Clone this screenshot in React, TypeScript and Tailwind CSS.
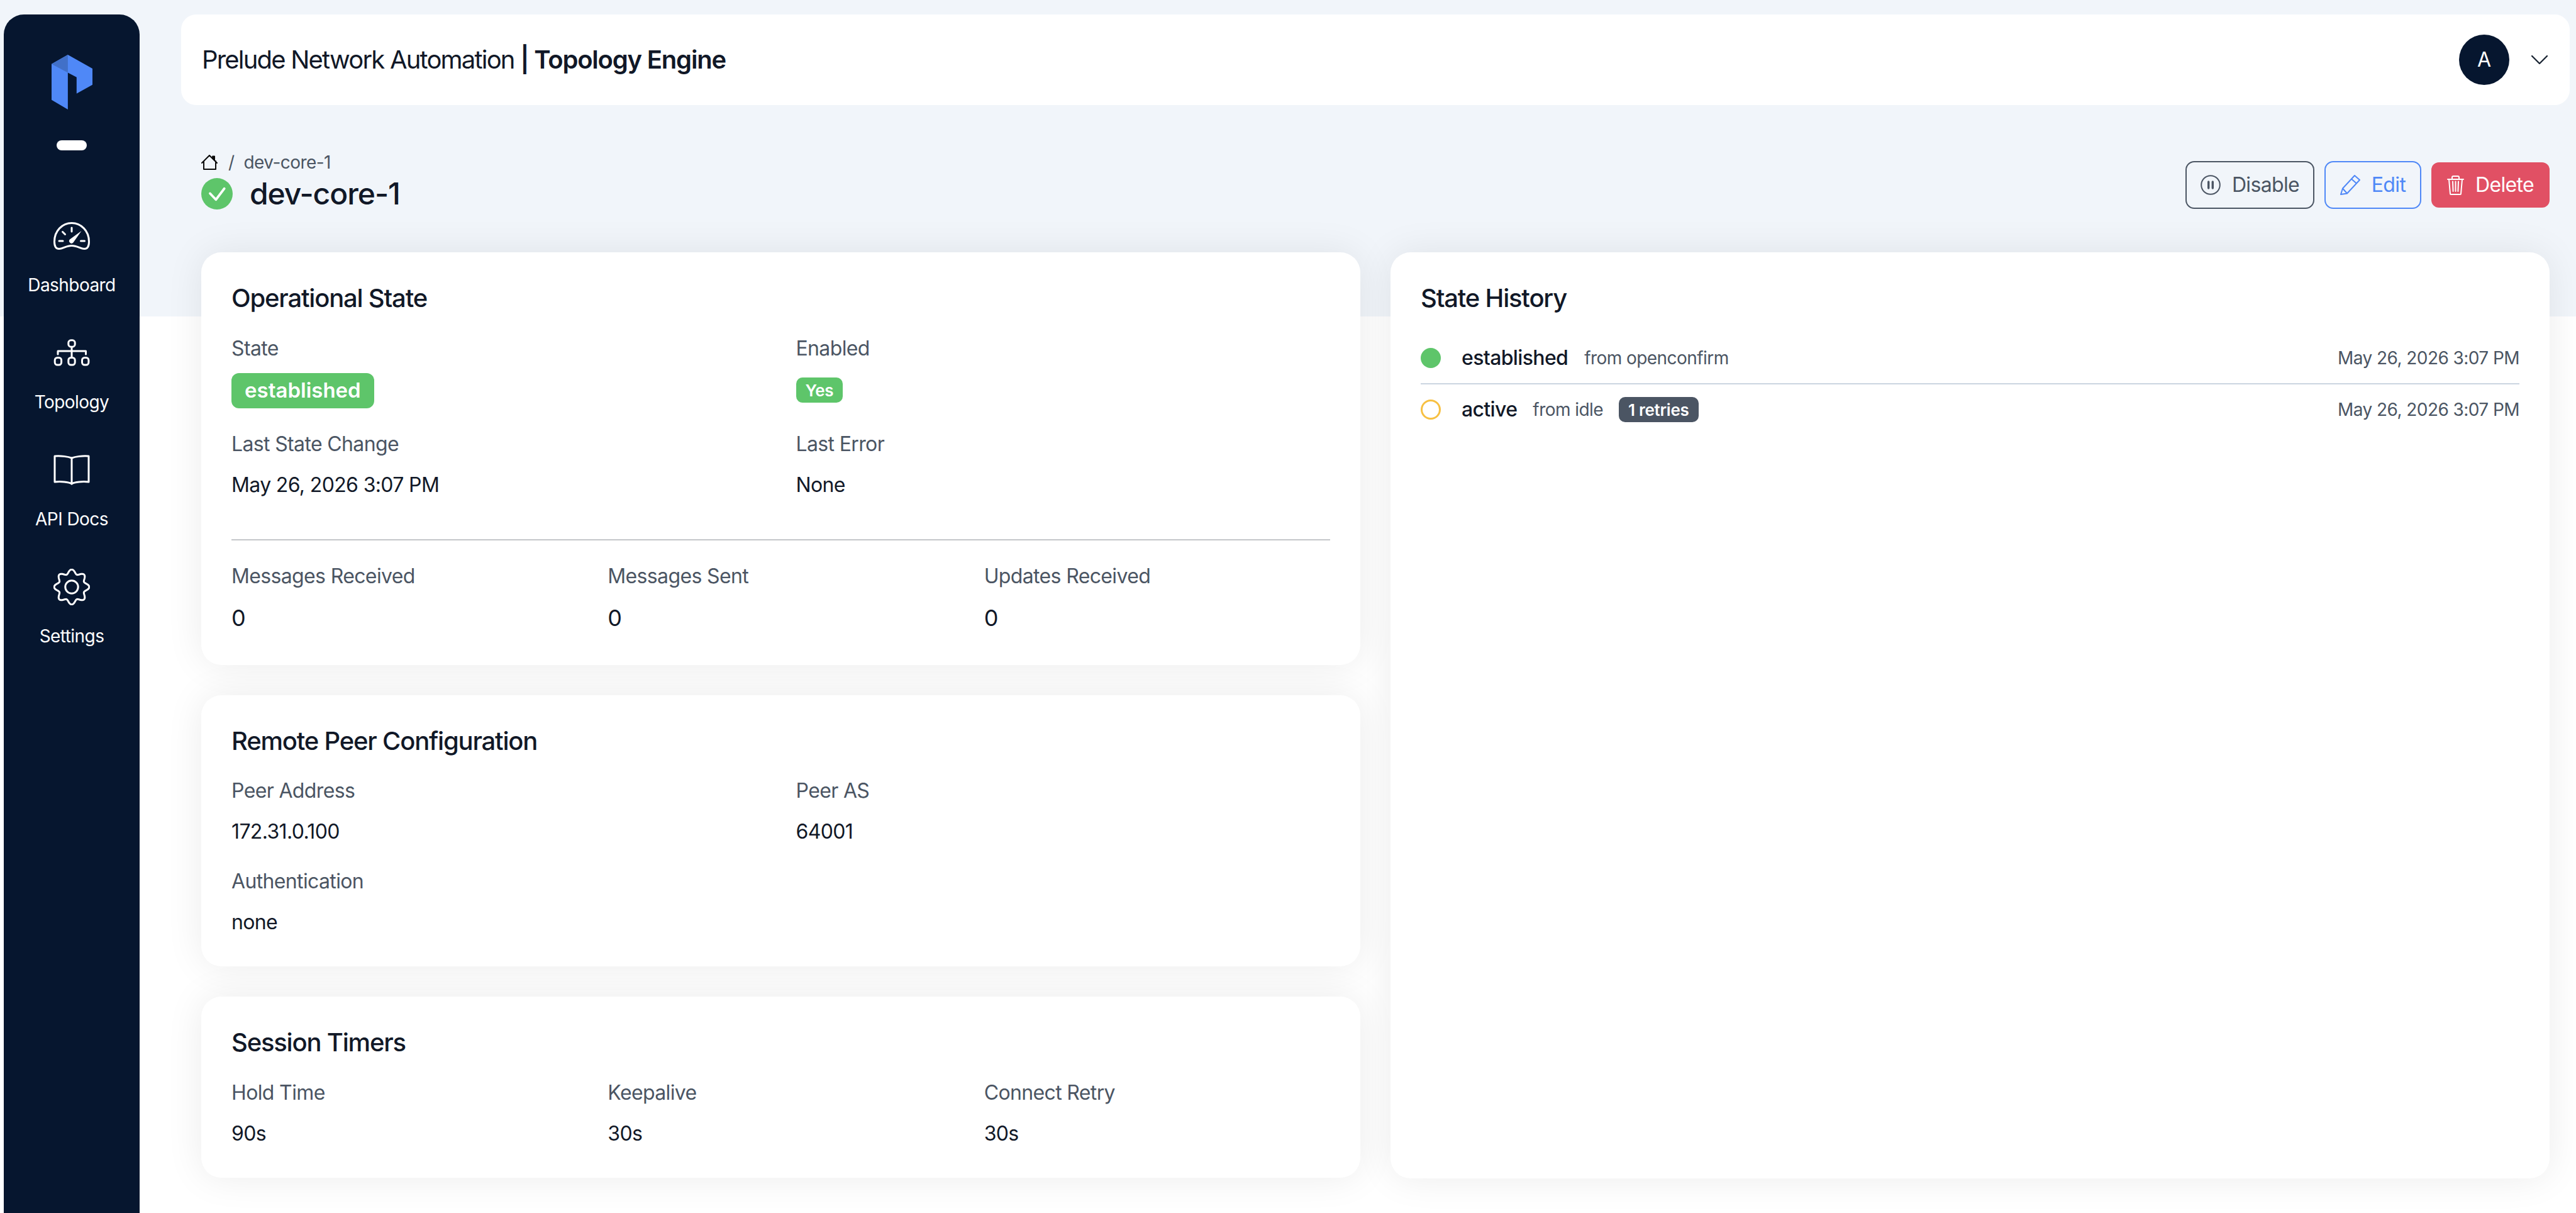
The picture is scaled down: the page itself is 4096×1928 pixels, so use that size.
import React from "react";

const gearPath = (() => {
  const pts: string[] = [];
  for (let d = 0; d < 360; d += 3) {
    const t = (d * Math.PI) / 180;
    const r = 24.5 + 3.4 * Math.cos(8 * t);
    pts.push((29 + r * Math.sin(t)).toFixed(2) + " " + (29 - r * Math.cos(t)).toFixed(2));
  }
  return "M" + pts.join("L") + "Z";
})();

const Gauge = () => (
  <svg width="58" height="44" viewBox="0 0 58 44" fill="none" stroke="currentColor" strokeWidth="3" strokeLinecap="round" strokeLinejoin="round">
    <path d="M9 42.5C4 42.5 1.5 38 1.5 31 1.5 14 14 1.5 29 1.5S56.5 14 56.5 31C56.5 38 54 42.5 49 42.5 43 42.5 38 37.5 29 37.5S15 42.5 9 42.5Z" />
    <path d="M29 9v6M14.5 15.5l4 4M9 30h6M43.5 30h6" />
    <path d="M44.5 14 31.5 32.5a3.7 3.7 0 0 1-5.5-5Z" fill="currentColor" stroke="none" />
  </svg>
);
const Topo = () => (
  <svg width="58" height="44" viewBox="0 0 58 44" fill="none" stroke="currentColor" strokeWidth="3" strokeLinecap="round" strokeLinejoin="round">
    <rect x="23.8" y="1.8" width="10.4" height="10.4" rx="4" />
    <path d="M29 13v15M7 24v-5h44.5v5" />
    <rect x="2.2" y="29.5" width="10.4" height="11.5" rx="4" />
    <rect x="23.8" y="29.5" width="10.4" height="11.5" rx="4" />
    <rect x="45.5" y="29.5" width="10.4" height="11.5" rx="4" />
  </svg>
);
const Book = () => (
  <svg width="58" height="48" viewBox="0 0 58 48" fill="none" stroke="currentColor" strokeWidth="3" strokeLinecap="round" strokeLinejoin="round">
    <path d="M29 5C24 3 12 1 2 2v41c10-1 22 0 27 3 5-3 17-4 27-3V2C46 1 34 3 29 5Z" />
    <path d="M29 5v41" />
  </svg>
);
const Gear = () => (
  <svg width="58" height="58" viewBox="0 0 58 58" fill="none" stroke="currentColor" strokeWidth="3" strokeLinejoin="round">
    <path d={gearPath} />
    <circle cx="29" cy="29" r="10.2" />
  </svg>
);

const navItems = [
  { label: "Dashboard", icon: <Gauge /> },
  { label: "Topology", icon: <Topo /> },
  { label: "API Docs", icon: <Book /> },
  { label: "Settings", icon: <Gear /> },
];

const Title = ({ children }: { children: React.ReactNode }) => (
  <h2 className="text-[40px] leading-[50px] font-[550] tracking-[-0.03em] text-[#111827]">{children}</h2>
);
const Card = ({ className, children }: { className: string; children: React.ReactNode }) => (
  <section className={"rounded-[32px] bg-white px-[48px] pt-[48px] shadow-[0_0_60px_rgba(0,0,0,0.08)] " + className}>{children}</section>
);
const Label = ({ children }: { children: React.ReactNode }) => (
  <div className="text-[32px] leading-[40px] tracking-[-0.02em] text-[#4b5563]">{children}</div>
);
const Field = ({ label, value }: { label: string; value: string }) => (
  <div>
    <Label>{label}</Label>
    <div className="mt-[23px] text-[32px] leading-[44px] tracking-[-0.02em] text-[#111827]">{value}</div>
  </div>
);
const Stat = ({ label }: { label: string }) => (
  <div>
    <Label>{label}</Label>
    <div className="mt-[23px] text-[36px] leading-[46px] text-[#111827]">0</div>
  </div>
);
const Time = () => <span className="ml-auto text-[28px] tracking-[-0.02em] text-[#4b5563]">May 26, 2026 3:07 PM</span>;

export default function App() {
  return (
    <div className="flex h-[1928px] w-[4096px] overflow-hidden bg-[linear-gradient(#f1f5fa_503px,#ffffff_503px)] font-['Inter',sans-serif]">
      <aside className="ml-[6px] mt-[23px] flex w-[216px] shrink-0 flex-col items-center rounded-t-[32px] bg-[#06162f] text-white">
        <svg className="mt-[64px]" width="65" height="87" viewBox="245 261 196 262">
          <path d="M245 305 323 261 441 327 441 405 365 447 365 369 323 347 323 523 245 477Z" fill="#4f88f7" />
          <path d="M245 305 323 261 323 347Z" fill="#4170c8" />
        </svg>
        <div className="mt-[49px] h-[16px] w-[48px] rounded-full bg-white" />
        <nav className="mt-[107px] flex flex-col items-center">
          {navItems.map((n) => (
            <div key={n.label} className="flex h-[186px] w-full flex-col items-center">
              <div className="flex h-[58px] items-center justify-center">{n.icon}</div>
              <div className="mt-[29px] text-[28px] leading-[40px] tracking-[-0.02em]">{n.label}</div>
            </div>
          ))}
        </nav>
      </aside>

      <main className="ml-[66px] flex min-w-0 flex-1 flex-col pr-[10px]">
        <header className="mt-[23px] flex h-[144px] shrink-0 items-center justify-between rounded-[24px] bg-white pl-[33px] pr-[35px]">
          <div className="text-[40px] tracking-[-0.045em] text-[#111827]">
            Prelude Network Automation <span className="font-semibold tracking-[-0.03em]">| Topology Engine</span>
          </div>
          <div className="flex items-center gap-[35px]">
            <div className="flex h-[80px] w-[80px] items-center justify-center rounded-full bg-[#06162f] text-[32px] text-white">A</div>
            <svg width="26" height="14" viewBox="0 0 26 14" fill="none" stroke="#1f2937" strokeWidth="2.4" strokeLinecap="round" strokeLinejoin="round"><path d="M1 1l12 12L25 1" /></svg>
          </div>
        </header>

        <div className="flex flex-1 flex-col px-[32px]">
          <div className="mt-[76px] flex h-[158px] shrink-0 items-start justify-between">
            <div>
              <div className="flex h-[30px] items-center text-[28px] tracking-[-0.02em] text-[#4b5563]">
                <svg width="26" height="24" viewBox="0 0 26 24" fill="none" stroke="#0a0a0a" strokeWidth="2" strokeLinecap="round" strokeLinejoin="round">
                  <path d="M1 13 13 1l12 12M4 10v13h19V10" />
                  <path d="M18 2h3.5v8L18 6Z" fill="#0a0a0a" strokeWidth="1" />
                </svg>
                <span className="ml-[17px]">/</span>
                <span className="ml-[15px]">dev-core-1</span>
              </div>
              <div className="mt-[7px] flex items-center">
                <svg width="50" height="50" viewBox="0 0 50 50">
                  <circle cx="25" cy="25" r="25" fill="#5ec56a" />
                  <path d="M14 24.5l9.3 9.8L36.7 16.7" fill="none" stroke="#fff" strokeWidth="3.8" strokeLinecap="round" strokeLinejoin="round" />
                </svg>
                <h1 className="ml-[27px] text-[48px] leading-[56px] font-[550] tracking-[-0.022em] text-[#111827]">dev-core-1</h1>
              </div>
            </div>
            <div className="mt-[13px] flex items-center gap-[16px] text-[32px] tracking-[-0.02em]">
              <button className="flex h-[76px] w-[205px] items-center justify-center gap-[18px] rounded-[14px] border-2 border-[#4b5563] text-[#4b5563]">
                <svg width="32" height="32" viewBox="0 0 32 32" fill="none" stroke="currentColor" strokeWidth="2"><circle cx="16" cy="16" r="14.8" /><path d="M12.7 11v10M19.3 11v10" strokeWidth="3.4" strokeLinecap="round" /></svg>
                Disable
              </button>
              <button className="flex h-[76px] w-[154px] items-center justify-center gap-[18px] rounded-[14px] border-2 border-[#4f88f7] text-[#4f88f7]">
                <svg width="32" height="32" viewBox="0 0 32 32" fill="none" stroke="currentColor" strokeWidth="2" strokeLinecap="round" strokeLinejoin="round"><path d="M23 1l8 7-20 21.5L1 31l3-9.5ZM18 6.5l8 7M4 21.5l7 8" /></svg>
                Edit
              </button>
              <button className="flex h-[72px] w-[188px] items-center justify-center gap-[18px] rounded-[12px] bg-[#e15064] text-white">
                <svg width="27" height="31" viewBox="0 0 27 31" fill="none" stroke="currentColor" strokeWidth="2" strokeLinecap="round" strokeLinejoin="round"><path d="M1 6h25M8 6V3q0-2 2-2h7q2 0 2 2v3M3 6l2 23q0 1 1 1h15q1 0 1-1l2-23M9 9.5l.6 15.5M13.5 9.5V25M18 9.5 17.4 25" /></svg>
                Delete
              </button>
            </div>
          </div>

          <div className="grid flex-1 grid-cols-[1843px_1843px] gap-x-[48px] pb-[55px]">
            <div className="flex flex-col gap-[48px]">
              <Card className="h-[656px]">
                <Title>Operational State</Title>
                <div className="mt-[35px] grid grid-cols-2 gap-x-[48px]">
                  <div>
                    <Label>State</Label>
                    <div className="mt-[19px] flex h-[56px] w-fit items-center rounded-[12px] bg-[#5ec56a] px-[21px] text-[33px] font-semibold text-white">established</div>
                  </div>
                  <div>
                    <Label>Enabled</Label>
                    <div className="mt-[26px] flex h-[40px] w-fit items-center rounded-[10px] bg-[#5ec56a] px-[15px] text-[26px] font-semibold tracking-[-0.01em] text-white">Yes</div>
                  </div>
                </div>
                <div className="mt-[37px] grid grid-cols-2 gap-x-[48px]">
                  <Field label="Last State Change" value="May 26, 2026 3:07 PM" />
                  <Field label="Last Error" value="None" />
                </div>
                <div className="mt-[64px] h-[2px] bg-[#c4c6c9]" />
                <div className="mt-[37px] grid grid-cols-3 gap-x-[48px]">
                  <Stat label="Messages Received" />
                  <Stat label="Messages Sent" />
                  <Stat label="Updates Received" />
                </div>
              </Card>

              <Card className="h-[431px]">
                <Title>Remote Peer Configuration</Title>
                <div className="mt-[34px] grid grid-cols-2 gap-x-[48px]">
                  <Field label="Peer Address" value="172.31.0.100" />
                  <Field label="Peer AS" value="64001" />
                </div>
                <div className="mt-[37px]">
                  <Field label="Authentication" value="none" />
                </div>
              </Card>

              <Card className="h-[288px]">
                <Title>Session Timers</Title>
                <div className="mt-[35px] grid grid-cols-3 gap-x-[48px]">
                  <Field label="Hold Time" value="90s" />
                  <Field label="Keepalive" value="30s" />
                  <Field label="Connect Retry" value="30s" />
                </div>
              </Card>
            </div>

            <Card className="h-[1472px]">
              <Title>State History</Title>
              <div className="mt-[38px] flex h-[74px] items-center border-b-2 border-[#cbd5e1] pb-[8px]">
                <div className="h-[32px] w-[32px] rounded-full bg-[#5ec56a]" />
                <span className="ml-[33px] text-[32px] font-[550] tracking-[-0.02em] text-[#111827]">established</span>
                <span className="ml-[26px] text-[28px] tracking-[-0.02em] text-[#4b5563]">from openconfirm</span>
                <Time />
              </div>
              <div className="mt-[12px] flex h-[56px] items-center">
                <div className="h-[32px] w-[32px] rounded-full border-[3px] border-[#f7c042]" />
                <span className="ml-[33px] text-[32px] font-[550] tracking-[-0.02em] text-[#111827]">active</span>
                <span className="ml-[25px] text-[28px] tracking-[-0.02em] text-[#4b5563]">from idle</span>
                <span className="ml-[25px] flex h-[40px] items-center rounded-[10px] bg-[#4b5563] px-[15px] text-[26px] font-semibold tracking-[-0.01em] text-white">1 retries</span>
                <Time />
              </div>
            </Card>
          </div>
        </div>
      </main>
    </div>
  );
}
